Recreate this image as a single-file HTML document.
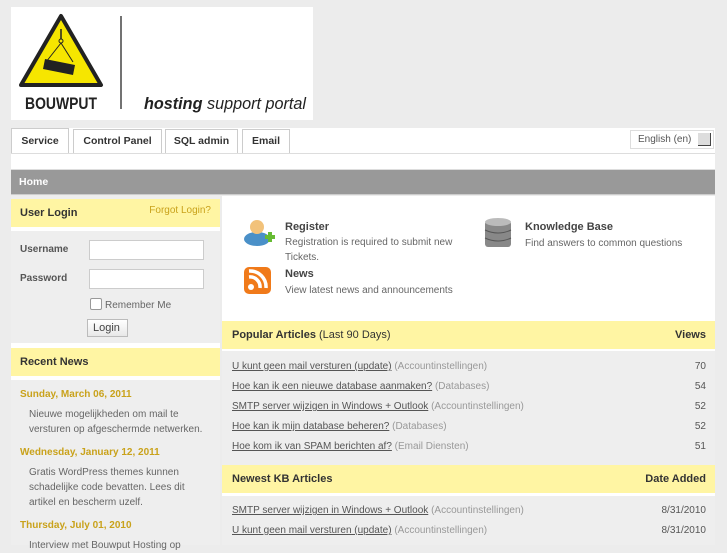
<!DOCTYPE html>
<html><head><meta charset="utf-8"><style>
*{margin:0;padding:0;box-sizing:border-box}
body{width:727px;height:545px;overflow:hidden;background:#ececec;font-family:"Liberation Sans","DejaVu Sans",sans-serif;font-size:10px;color:#555;position:relative}
.abs{position:absolute}
.logo{left:11px;top:7px;width:302px;height:113px;background:#fff}
.tabs{left:11px;top:128px;width:704px;height:25px;background:#fff}
.tab{position:absolute;top:1px;height:24px;border:1px solid #ccc;border-bottom:none;background:#fff;font-weight:bold;font-size:10.5px;color:#333;padding:5px 0 0;text-align:center;white-space:nowrap}
.strip{left:11px;top:153px;width:704px;height:17px;background:#fff;border-top:1px solid #ddd;border-bottom:1px solid #ddd}
.home{left:11px;top:170px;width:704px;height:25px;background:#999;border-bottom:1px solid #ccc;color:#fff;font-weight:bold;font-size:10.5px;padding:6px 8px}
.yh{background:#fff5a3;color:#333;font-weight:bold;font-size:11px}
.lbl{font-weight:bold;color:#555;font-size:10px}
.inp{background:#fff;border:1px solid #ccc;height:20px;width:115px}
.date{color:#c9a21b;font-weight:bold;font-size:10px}
.nt{color:#666;line-height:15px;font-size:10px}
a{color:#555;text-decoration:underline}
.row{position:absolute;left:232px;width:474px;font-size:10px;color:#555}
.row span.c{color:#999}
.row .r{position:absolute;right:0;top:0}
</style></head><body>
<div class="abs logo">
<svg width="302" height="113" viewBox="0 0 302 113">
<polygon points="50,9 90,78 10,78" fill="#f6e600" stroke="#222" stroke-width="4" stroke-linejoin="round"/>
<line x1="50" y1="22" x2="50" y2="32" stroke="#222" stroke-width="1.5"/>
<circle cx="50" cy="34" r="2" fill="none" stroke="#222"/>
<line x1="50" y1="36" x2="35" y2="55" stroke="#222" stroke-width="1"/>
<line x1="50" y1="36" x2="62" y2="55" stroke="#222" stroke-width="1"/>
<polygon points="34,52 64,58 62,68 32,62" fill="#222"/>
<text x="14" y="102" font-family="Liberation Sans" font-weight="bold" font-size="17" fill="#222" textLength="72" lengthAdjust="spacingAndGlyphs">BOUWPUT</text>
<line x1="110" y1="9" x2="110" y2="102" stroke="#444" stroke-width="1.5"/>
<text x="133" y="102" font-family="Liberation Sans" font-style="italic" font-size="17" fill="#222" textLength="162" lengthAdjust="spacingAndGlyphs"><tspan font-weight="bold">hosting</tspan> support portal</text>
</svg></div>
<div class="abs tabs">
<div class="tab" style="left:0;width:58px;top:0;height:25px;background:#fff;padding-top:6px">Service</div>
<div class="tab" style="left:62px;width:89px">Control Panel</div>
<div class="tab" style="left:154px;width:73px">SQL admin</div>
<div class="tab" style="left:231px;width:48px">Email</div>
<div style="position:absolute;left:619px;top:2px;width:84px;height:19px;border:1px solid #ddd;background:#fff;font-size:10px;padding:3px 7px;color:#555">English (en)<span style="position:absolute;right:2px;top:2px;width:13px;height:13px;background:#ddd;border-right:1px solid #444;border-bottom:1px solid #444"></span></div>
</div>
<div class="abs strip"></div>
<div class="abs home">Home</div>

<div class="abs" style="left:11px;top:196px;width:209px;height:349px;background:#eee"></div>
<div class="abs yh" style="left:11px;top:199px;width:209px;height:28px;padding:8px 9px">User Login<span style="position:absolute;right:9px;top:6px;font-weight:normal;color:#c9a21b;font-size:10px">Forgot Login?</span></div>
<div class="abs" style="left:11px;top:227px;width:209px;height:4px;background:#fff"></div>
<div class="abs lbl" style="left:20px;top:244px">Username</div>
<div class="abs inp" style="left:89px;top:240px"></div>
<div class="abs lbl" style="left:20px;top:273px">Password</div>
<div class="abs inp" style="left:89px;top:269px"></div>
<div class="abs" style="left:90px;top:298px;width:12px;height:12px;border:1px solid #999;background:#fff;border-radius:2px"></div>
<div class="abs" style="left:105px;top:300px;color:#666">Remember Me</div>
<div class="abs" style="left:87px;top:319px;width:41px;height:18px;border:1px solid #bbb;background:linear-gradient(#fff,#e8e8e8);font-size:11px;padding:2px 5px;color:#444">Login</div>
<div class="abs" style="left:11px;top:343px;width:209px;height:5px;background:#fff"></div>
<div class="abs yh" style="left:11px;top:348px;width:209px;height:28px;padding:8px 9px">Recent News</div>
<div class="abs" style="left:11px;top:376px;width:209px;height:4px;background:#fff"></div>
<div class="abs date" style="left:20px;top:389px">Sunday, March 06, 2011</div>
<div class="abs nt" style="left:29px;top:407px;width:185px">Nieuwe mogelijkheden om mail te versturen op afgeschermde netwerken.</div>
<div class="abs date" style="left:20px;top:447px">Wednesday, January 12, 2011</div>
<div class="abs nt" style="left:29px;top:465px;width:185px">Gratis WordPress themes kunnen schadelijke code bevatten. Lees dit artikel en bescherm uzelf.</div>
<div class="abs date" style="left:20px;top:520px">Thursday, July 01, 2010</div>
<div class="abs nt" style="left:29px;top:538px;width:185px">Interview met Bouwput Hosting op</div>

<div class="abs" style="left:222px;top:196px;width:493px;height:349px;background:#fff"></div>
<svg class="abs" style="left:241px;top:217px" width="36" height="80" viewBox="0 0 36 80">
<ellipse cx="16" cy="22" rx="13" ry="7" fill="#4a90c8"/><circle cx="16" cy="10" r="7" fill="#f2c27a"/>
<rect x="24" y="18" width="10" height="4" fill="#6b3"/><rect x="27" y="15" width="4" height="10" fill="#6b3"/>
<rect x="3" y="50" width="27" height="27" rx="5" fill="#f07a1a"/>
<circle cx="10" cy="70" r="3" fill="#fff"/>
<path d="M8 60a10 10 0 0 1 11 11M8 54a16 16 0 0 1 17 17" stroke="#fff" stroke-width="3.5" fill="none"/>
</svg>
<svg class="abs" style="left:484px;top:217px" width="28" height="34" viewBox="0 0 28 34">
<rect x="1" y="4" width="26" height="26" rx="3" fill="#888"/>
<ellipse cx="14" cy="5" rx="13" ry="4" fill="#bbb"/>
<path d="M1 13q13 6 26 0M1 21q13 6 26 0" stroke="#555" fill="none"/>
</svg>
<div class="abs" style="left:285px;top:221px;font-weight:bold;font-size:11px;color:#444">Register</div>
<div class="abs nt" style="left:285px;top:236px;width:180px;line-height:14.5px">Registration is required to submit new Tickets.</div>
<div class="abs" style="left:285px;top:268px;font-weight:bold;font-size:11px;color:#444">News</div>
<div class="abs nt" style="left:285px;top:283px">View latest news and announcements</div>
<div class="abs" style="left:525px;top:221px;font-weight:bold;font-size:11px;color:#444">Knowledge Base</div>
<div class="abs nt" style="left:525px;top:236px">Find answers to common questions</div>

<div class="abs yh" style="left:222px;top:321px;width:493px;height:28px;padding:8px 10px">Popular Articles <span style="font-weight:normal">(Last 90 Days)</span><span style="position:absolute;right:9px;top:8px">Views</span></div>
<div class="abs" style="left:222px;top:351px;width:493px;height:116px;background:#eee"></div>
<div class="row" style="top:361px"><a>U kunt geen mail versturen (update)</a> <span class="c">(Accountinstellingen)</span><span class="r">70</span></div>
<div class="row" style="top:381px"><a>Hoe kan ik een nieuwe database aanmaken?</a> <span class="c">(Databases)</span><span class="r">54</span></div>
<div class="row" style="top:401px"><a>SMTP server wijzigen in Windows + Outlook</a> <span class="c">(Accountinstellingen)</span><span class="r">52</span></div>
<div class="row" style="top:421px"><a>Hoe kan ik mijn database beheren?</a> <span class="c">(Databases)</span><span class="r">52</span></div>
<div class="row" style="top:441px"><a>Hoe kom ik van SPAM berichten af?</a> <span class="c">(Email Diensten)</span><span class="r">51</span></div>
<div class="abs yh" style="left:222px;top:465px;width:493px;height:28px;padding:8px 10px">Newest KB Articles<span style="position:absolute;right:9px;top:8px">Date Added</span></div>
<div class="abs" style="left:222px;top:496px;width:493px;height:49px;background:#eee"></div>
<div class="row" style="top:505px"><a>SMTP server wijzigen in Windows + Outlook</a> <span class="c">(Accountinstellingen)</span><span class="r">8/31/2010</span></div>
<div class="row" style="top:525px"><a>U kunt geen mail versturen (update)</a> <span class="c">(Accountinstellingen)</span><span class="r">8/31/2010</span></div>
</body></html>
